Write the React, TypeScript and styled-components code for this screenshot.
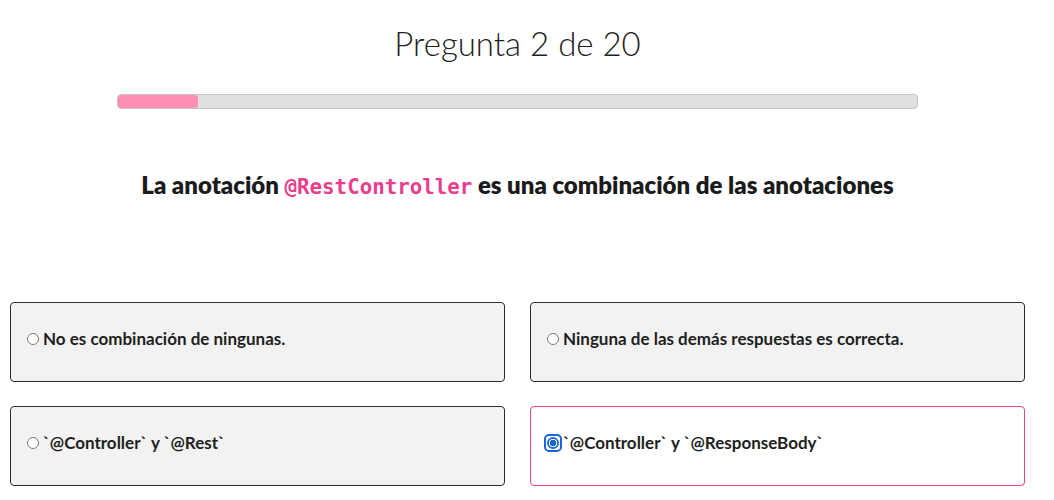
import React from 'react';
import styled, { createGlobalStyle } from 'styled-components';

const GlobalStyle = createGlobalStyle`
  html, body {
    margin: 0;
    padding: 0;
    background: #ffffff;
    font-family: Lato, 'Noto Sans', sans-serif;
    color: #212121;
  }
`;

const Page = styled.div`
  width: 1035px;
  display: flex;
  flex-direction: column;
  align-items: center;
`;

const Title = styled.h1`
  margin: 23px 0 0;
  font-family: Lato, sans-serif;
  font-weight: 300;
  font-size: 33px;
  line-height: 40px;
  color: #212121;
`;

const Track = styled.div`
  margin-top: 31px;
  width: 801px;
  height: 15px;
  box-sizing: border-box;
  background: #e0e0e0;
  border: 1px solid #c4c4c4;
  border-radius: 4px;
  overflow: hidden;
`;

interface FillProps {
  $percent: number;
}

const Fill = styled.div<FillProps>`
  height: 100%;
  width: ${(p) => p.$percent}%;
  background: #ff8fb7;
  border-radius: 3px;
`;

const Question = styled.h2`
  margin: 60px 0 0;
  font-family: Lato, sans-serif;
  font-weight: 800;
  font-size: 24px;
  line-height: 32px;
  color: #1b1b1b;
`;

const Code = styled.code`
  font-family: 'DejaVu Sans Mono', 'Liberation Mono', monospace;
  font-size: 20.8px;
  font-weight: 700;
  color: #e83e8c;
`;

const Options = styled.div`
  margin-top: 99px;
  align-self: stretch;
  padding-left: 10px;
  display: grid;
  grid-template-columns: 495px 495px;
  column-gap: 25px;
  row-gap: 24px;
`;

interface CardProps {
  $selected?: boolean;
}

const Card = styled.label<CardProps>`
  height: 80px;
  box-sizing: border-box;
  display: flex;
  align-items: center;
  padding: 0 11px 7px;
  border: 1px solid ${(p) => (p.$selected ? '#ec3f82' : '#2b2b2b')};
  border-radius: 4px;
  background: ${(p) => (p.$selected ? '#ffffff' : '#f2f2f2')};
  font-family: Lato, sans-serif;
  font-weight: 700;
  font-size: 17px;
  color: #1e1e1e;
  cursor: pointer;
`;

interface RadioProps {
  $checked?: boolean;
}

const Radio = styled.span<RadioProps>`
  position: relative;
  flex: none;
  width: 12px;
  height: 12px;
  margin: 0 4px 0 5px;
  box-sizing: border-box;
  border-radius: 50%;
  border: 1px solid ${(p) => (p.$checked ? '#1a66d9' : '#7a7a7a')};
  background: ${(p) => (p.$checked
    ? 'radial-gradient(circle, #1a66d9 0 3px, #ffffff 3.5px 4px, #1a66d9 4.5px)'
    : '#ffffff')};

  &::after {
    content: '';
    display: ${(p) => (p.$checked ? 'block' : 'none')};
    position: absolute;
    inset: -4px;
    border: 2px solid #1a66d9;
    border-radius: 5px;
  }
`;

const options = [
  { text: 'No es combinación de ningunas.' },
  { text: 'Ninguna de las demás respuestas es correcta.' },
  { text: '`@Controller` y `@Rest`' },
  { text: '`@Controller` y `@ResponseBody`', selected: true },
];

export default function App() {
  return (
    <>
      <GlobalStyle />
      <Page>
        <Title>Pregunta 2 de 20</Title>
        <Track>
          <Fill $percent={10} />
        </Track>
        <Question>
          La anotación <Code>@RestController</Code> es una combinación de las anotaciones
        </Question>
        <Options>
          {options.map((o) => (
            <Card key={o.text} $selected={o.selected}>
              <Radio $checked={o.selected} />
              {o.text}
            </Card>
          ))}
        </Options>
      </Page>
    </>
  );
}
